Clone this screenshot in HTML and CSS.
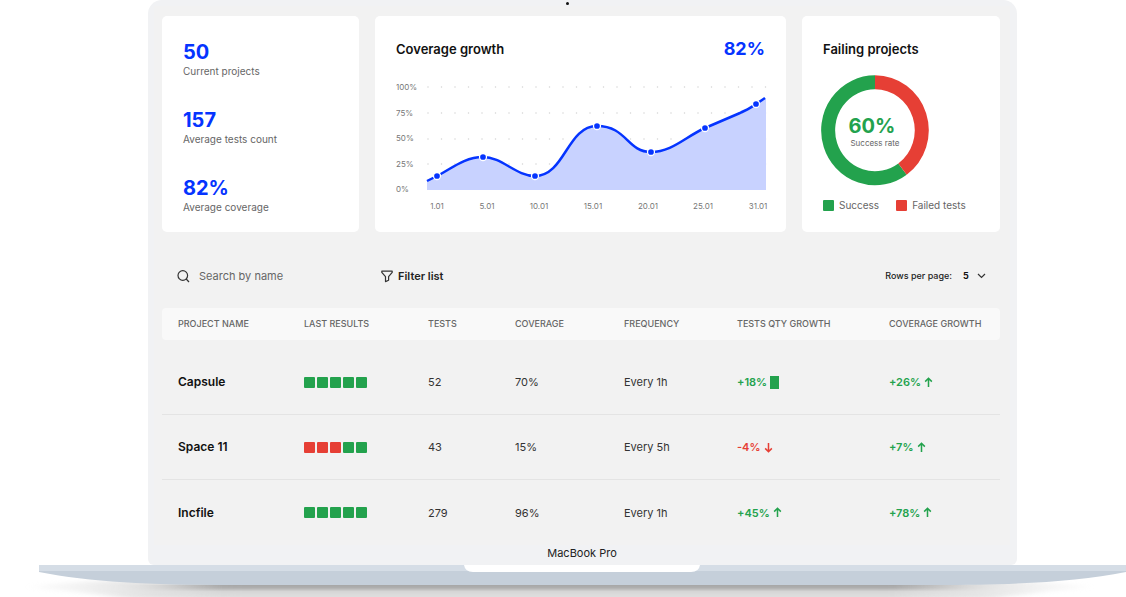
FILE: index.html
```html
<!DOCTYPE html>
<html lang="en">
<head>
<meta charset="utf-8">
<meta name="viewport" content="width=device-width, initial-scale=1">
<title>Test coverage dashboard</title>
<link rel="stylesheet" href="styles.css">
</head>
<body>
<svg class="defs" aria-hidden="true">
  <symbol id="up" viewBox="0 0 10 12"><path d="M5 11V1.5M1.3 5 5 1.3 8.7 5" fill="none" stroke="currentColor" stroke-width="1.7"/></symbol>
  <symbol id="down" viewBox="0 0 10 12"><path d="M5 1v9.5M1.3 7 5 10.7 8.7 7" fill="none" stroke="currentColor" stroke-width="1.7"/></symbol>
</svg>
<div class="lid">
  <div class="camera"></div>
  <main class="screen">
    <div class="cards">
      <section class="card stats">
        <div><div class="value">50</div><div class="label">Current projects</div></div>
        <div><div class="value">157</div><div class="label">Average tests count</div></div>
        <div><div class="value">82%</div><div class="label">Average coverage</div></div>
      </section>
      <section class="card growth">
        <header class="card-head"><h2>Coverage growth</h2><strong>82%</strong></header>
        <svg class="chart" viewBox="0 0 372 132" role="img" aria-label="Coverage growth by date">
          <g class="dots"><path d="M32 7H370M32 33H370M32 59H370M32 84H370"/></g>
          <path class="area" d="M31 101 41 96C55 89 68 77 87 77S120 96 139 96C169 96 171 46 201 46S231 72 255 72C276 72 289 57 309 48L344 33C350 30 355 28 360 24L370 18V110H31Z"/>
          <path class="line" d="M31 101 41 96C55 89 68 77 87 77S120 96 139 96C169 96 171 46 201 46S231 72 255 72C276 72 289 57 309 48L344 33C350 30 355 28 360 24L369 18"/>
          <g class="points">
            <circle cx="41" cy="96" r="3.5"/><circle cx="87" cy="77" r="3.5"/><circle cx="139" cy="96" r="3.5"/><circle cx="201" cy="46" r="3.5"/><circle cx="255" cy="72" r="3.5"/><circle cx="309" cy="48" r="3.5"/><circle cx="360" cy="24" r="3.5"/>
          </g>
          <g class="axis">
            <text x="0" y="10">100%</text><text x="0" y="36">75%</text><text x="0" y="61">50%</text><text x="0" y="87">25%</text><text x="0" y="112">0%</text>
          </g>
          <g class="axis dates">
            <text x="41" y="129">1.01</text><text x="91" y="129">5.01</text><text x="143" y="129">10.01</text><text x="197" y="129">15.01</text><text x="252" y="129">20.01</text><text x="307" y="129">25.01</text><text x="362" y="129">31.01</text>
          </g>
        </svg>
      </section>
      <section class="card failing">
        <h2>Failing projects</h2>
        <svg class="donut" viewBox="0 0 108 111" role="img" aria-label="Success rate 60%">
          <path class="ring-ok" d="M81.5 94.1A46.8 48 0 1 1 54 7.3"/>
          <path class="ring-bad" d="M54 7.3A46.8 48 0 0 1 81.5 94.1"/>
          <text class="rate" x="51" y="58">60%</text>
          <text class="rate-label" x="54" y="71">Success rate</text>
        </svg>
        <ul class="legend">
          <li><i class="box ok"></i>Success</li>
          <li><i class="box bad"></i>Failed tests</li>
        </ul>
      </section>
    </div>
    <div class="toolbar">
      <label class="search">
        <svg width="13" height="13" viewBox="0 0 13 13" aria-hidden="true"><circle cx="5.8" cy="5.5" r="4.8"/><path d="m9.2 9 2.8 3"/></svg>
        <input type="text" placeholder="Search by name" aria-label="Search by name">
      </label>
      <button class="filter" type="button">
        <svg width="12" height="13" viewBox="0 0 12 13" aria-hidden="true"><path d="M.8 1.2h10.4v1.2L7.6 6.7v3.6L4.5 11.6V6.7L.8 2.4Z" stroke-linejoin="round"/></svg>
        Filter list
      </button>
      <div class="pager">
        <label for="rows">Rows per page:</label>
        <select id="rows"><option>5</option><option>10</option><option>20</option></select>
        <svg width="9" height="6" viewBox="0 0 9 6" aria-hidden="true"><path d="m1 1 3.5 3.5L8 1"/></svg>
      </div>
    </div>
    <table class="projects">
      <colgroup><col class="c-name"><col class="c-results"><col class="c-tests"><col class="c-coverage"><col class="c-frequency"><col class="c-qty"><col class="c-growth"></colgroup>
      <thead>
        <tr><th>PROJECT NAME</th><th>LAST RESULTS</th><th>TESTS</th><th>COVERAGE</th><th>FREQUENCY</th><th>TESTS QTY GROWTH</th><th>COVERAGE GROWTH</th></tr>
      </thead>
      <tbody>
        <tr><td class="name">Capsule</td><td><div class="results"><i class="box ok"></i><i class="box ok"></i><i class="box ok"></i><i class="box ok"></i><i class="box ok"></i></div></td><td>52</td><td>70%</td><td>Every 1h</td><td><div class="delta">+18% <i class="block"></i></div></td><td><div class="delta">+26% <svg><use href="#up"/></svg></div></td></tr>
        <tr><td class="name">Space 11</td><td><div class="results"><i class="box bad"></i><i class="box bad"></i><i class="box bad"></i><i class="box ok"></i><i class="box ok"></i></div></td><td>43</td><td>15%</td><td>Every 5h</td><td><div class="delta negative">-4% <svg><use href="#down"/></svg></div></td><td><div class="delta">+7% <svg><use href="#up"/></svg></div></td></tr>
        <tr><td class="name">Incfile</td><td><div class="results"><i class="box ok"></i><i class="box ok"></i><i class="box ok"></i><i class="box ok"></i><i class="box ok"></i></div></td><td>279</td><td>96%</td><td>Every 1h</td><td><div class="delta">+45% <svg><use href="#up"/></svg></div></td><td><div class="delta">+78% <svg><use href="#up"/></svg></div></td></tr>
      </tbody>
    </table>
  </main>
  <div class="model">MacBook Pro</div>
</div>
<svg class="base" viewBox="0 0 1126 32" preserveAspectRatio="none" aria-hidden="true">
  <defs>
    <linearGradient id="depth" x1="0" y1="0" x2="0" y2="1">
      <stop offset="0" stop-color="#a6a6a6"/><stop offset=".25" stop-color="#b0b0b0"/><stop offset=".55" stop-color="#d6d6d6"/><stop offset="1" stop-color="#dedede"/>
    </linearGradient>
    <linearGradient id="fade">
      <stop offset="0" stop-color="#fff" stop-opacity="0"/><stop offset=".06" stop-color="#fff" stop-opacity=".2"/><stop offset=".2" stop-color="#fff"/><stop offset=".8" stop-color="#fff"/><stop offset=".94" stop-color="#fff" stop-opacity=".2"/><stop offset="1" stop-color="#fff" stop-opacity="0"/>
    </linearGradient>
    <mask id="ends"><rect width="1116" height="32" fill="url(#fade)"/></mask>
    <filter id="soft" x="-5%" y="-50%" width="110%" height="200%"><feGaussianBlur stdDeviation="6 2"/></filter>
    <filter id="sides" x="-10%" y="0" width="120%" height="100%"><feGaussianBlur stdDeviation="30 0"/></filter>
  </defs>
  <g mask="url(#ends)">
    <path d="M30 22Q80 14 170 15H950Q1040 14 1090 22 1040 27 990 34H130Q80 27 30 22Z" fill="#cfcfcf" filter="url(#soft)"/>
    <path d="M170 20H960V32H170Z" fill="url(#depth)" filter="url(#sides)"/>
  </g>
  <path d="M39 7C90 17 150 20 230 20H935C1015 20 1075 17 1126 7V5H39Z" fill="#c5cfda"/>
  <path d="M39 0H1126V6H39Z" fill="#d5dde6"/>
  <path d="M464 0H700Q699 7 691 7H473Q465 7 464 0Z" fill="#fff"/>
</svg>
</body>
</html>
```
FILE: styles.css
```css
* { box-sizing: border-box; }

body {
  margin: 0;
  background: #fff;
  color: #222;
  font: 10px/14px Inter, "Liberation Sans", sans-serif;
}

.defs { position: absolute; width: 0; height: 0; }

.lid {
  margin: 0 109px 0 148px;
  padding: 0 7px 0 6px;
  background: #f1f2f4;
  border-radius: 14px 14px 6px 6px;
}

.camera {
  display: flex;
  justify-content: center;
  height: 6px;
  padding: 2px 29px 0 0;
}

.camera::before {
  content: "";
  width: 3px;
  height: 3px;
  border-radius: 50%;
  background: #111;
}

.screen {
  padding: 10px 10px 0 8px;
  background: #f2f2f2;
}

.cards, .toolbar {
  display: grid;
  grid-template-columns: minmax(0, 197fr) minmax(0, 411fr) minmax(0, 198fr);
  gap: 16px;
}

.card {
  min-width: 0;
  padding: 21px;
  background: #fff;
  border-radius: 5px;
}

h2 {
  margin: 0;
  color: #111;
  font-size: 13px;
  font-weight: 600;
  line-height: 24px;
}

.stats {
  display: flex;
  flex-direction: column;
  gap: 30px;
  padding: 24px 21px 0;
}

.value {
  color: #0534ff;
  font-size: 20px;
  font-weight: 700;
  line-height: 24px;
}

.label { color: #666; line-height: 14px; }

.growth { padding: 21px 18px 20px 21px; }

.card-head {
  display: flex;
  justify-content: space-between;
  padding-right: 3px;
}

.card-head strong {
  color: #0534ff;
  font-size: 18px;
  line-height: 24px;
}

.chart { display: block; width: 100%; margin-top: 19px; }
.dots { fill: none; stroke: #d4d4d4; stroke-width: 1.5; stroke-linecap: round; stroke-dasharray: 0 13.5; }
.area { fill: #c8d2ff; }
.line { fill: none; stroke: #0534ff; stroke-width: 2.5; }
.points { fill: #0534ff; stroke: #fff; stroke-width: 1.3; }
.axis { fill: #777; font-size: 8px; }
.dates { text-anchor: middle; }

.failing { padding: 21px 19px 20px; }
.failing h2 { padding-left: 2px; }
.donut { display: block; width: 108px; margin-top: 14px; }
.ring-ok, .ring-bad { fill: none; stroke: #23a24d; stroke-width: 14; }
.ring-bad { stroke: #e63f35; }
.rate { fill: #23a24d; font-size: 20px; font-weight: 700; text-anchor: middle; }
.rate-label { fill: #666; font-size: 8px; text-anchor: middle; }

.legend {
  display: flex;
  gap: 17px;
  margin: 12px 0 0;
  padding: 0 0 0 2px;
  color: #666;
  list-style: none;
  white-space: nowrap;
}

.legend li { display: flex; align-items: center; gap: 5px; }

.box { width: 11px; height: 11px; border-radius: 1px; background: #23a24d; }
.box.bad { background: #e63f35; }

.toolbar {
  padding: 34px 0 22px;
  line-height: 20px;
}

.toolbar svg { flex: none; fill: none; stroke: #333; stroke-width: 1.2; }

.search {
  display: flex;
  align-items: center;
  gap: 9px;
  padding-left: 15px;
}

.search input {
  flex: 1;
  min-width: 0;
  padding: 0;
  border: 0;
  background: none;
  color: #222;
  font: inherit;
  font-size: 11px;
}

.search input::placeholder { color: #666; opacity: 1; }

.filter {
  display: flex;
  align-items: center;
  justify-self: start;
  gap: 5px;
  padding: 0 0 0 6px;
  border: 0;
  background: none;
  color: #222;
  font: inherit;
  font-size: 11px;
  font-weight: 600;
}

.pager {
  display: flex;
  align-items: center;
  justify-content: flex-end;
  padding-right: 14px;
  font-size: 9px;
  font-weight: 500;
  white-space: nowrap;
}

.pager select {
  width: 14px;
  margin-left: 11px;
  padding: 0;
  border: 0;
  appearance: none;
  background: none;
  color: #111;
  font: inherit;
  font-weight: 700;
}

.projects {
  width: 100%;
  border-spacing: 0;
  table-layout: fixed;
  font-size: 11px;
}

.c-name { width: 142px; }
.c-results { width: 124px; }
.c-tests { width: 87px; }
.c-coverage { width: 109px; }
.c-frequency { width: 113px; }
.c-qty { width: 152px; }
.c-growth { width: 111px; }

th {
  height: 32px;
  padding: 0;
  background: #f9f9f9;
  color: #666;
  font-size: 9px;
  font-weight: 500;
  text-align: left;
  white-space: nowrap;
}

th:first-child { border-radius: 4px 0 0 4px; }
th:last-child { border-radius: 0 4px 4px 0; }
th:first-child, td:first-child { padding-left: 16px; }

tbody::before { content: ""; display: block; height: 10px; }

td {
  height: 65px;
  padding: 0;
  border-bottom: 1px solid #e4e4e4;
  color: #333;
}

tbody tr:last-child td { border-bottom: 0; }

.name { color: #111; font-size: 12px; font-weight: 600; }
.results { display: flex; gap: 2px; }
.delta { display: flex; align-items: center; gap: 3px; color: #23a24d; font-weight: 600; }
.negative { color: #e63f35; }
.delta svg { width: 9px; height: 11px; }
.block { width: 9px; height: 13px; background: #23a24d; }

.model {
  padding-bottom: 4px;
  color: #222;
  font-size: 11px;
  line-height: 16px;
  text-align: center;
}

.base { display: block; width: 100%; height: 32px; }
```
